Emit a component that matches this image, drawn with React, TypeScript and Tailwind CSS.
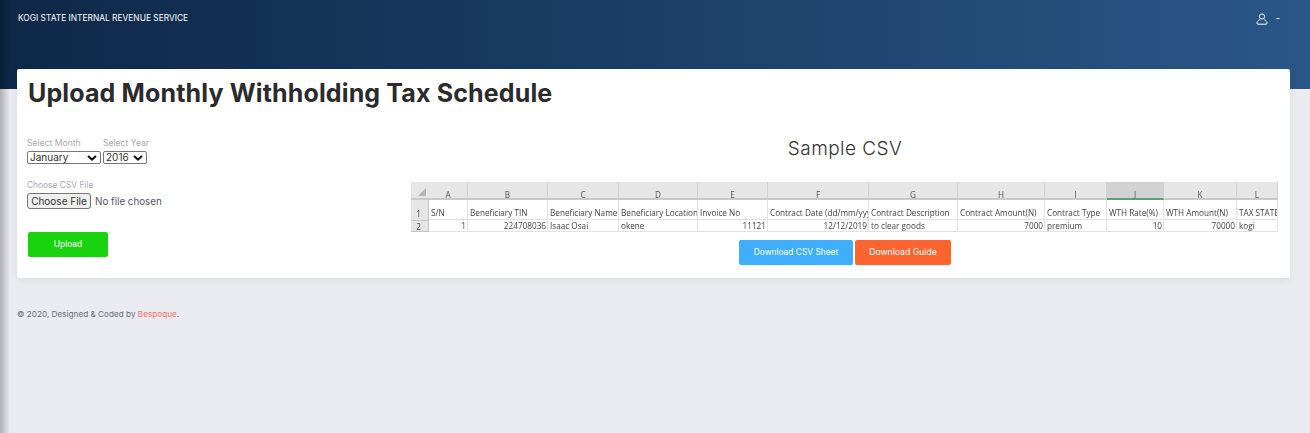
import React from "react";

const cols = ["A","B","C","D","E","F","G","H","I","J","K","L"];
const row1 = ["S/N","Beneficiary TIN","Beneficiary Name","Beneficiary Location","Invoice No","Contract Date (dd/mm/yyy","Contract Description","Contract Amount(N)","Contract Type","WTH Rate(%)","WTH Amount(N)","TAX STATE"];
const row2: [string, boolean][] = [["1",true],["224708036",true],["Isaac Osai",false],["okene",false],["11121",true],["12/12/2019",true],["to clear goods",false],["7000",true],["premium",false],["10",true],["70000",true],["kogi",false]];

function Sheet() {
  return (
    <div className="w-[868px] grid grid-cols-[18px_39px_80px_71px_79px_70px_101px_89px_87px_62px_57px_73px_41px] grid-rows-[18px_20px_12px] text-[8.2px] leading-[11px] text-[#444444] font-['Open_Sans',sans-serif] blur-[0.3px]">
      <div className="bg-[#e6e6e6] border-b-[2px] border-[#c9c9c9] flex items-end justify-end pr-[3px] pb-[2px]">
        <svg width="8" height="8" viewBox="0 0 8 8"><path d="M8 0V8H0Z" fill="#b5b5b5" /></svg>
      </div>
      {cols.map((c) => (
        <div key={c} className={c === "J" ? "bg-[#d2d2d2] border-b-[2px] border-[#5f9e7c] border-r border-r-[#d0d0d0] flex items-center justify-center pt-[9px] text-[#2f6f4f]" : "bg-[#e6e6e6] border-b-[2px] border-[#c9c9c9] border-r border-r-[#d0d0d0] flex items-center justify-center pt-[9px] text-[#555555]"}>{c}</div>
      ))}
      <div className="bg-[#e6e6e6] border-r border-[#c4c4c4] flex items-end justify-center pr-[2px] pb-px text-[#444444]">1</div>
      {row1.map((t) => (
        <div key={t} className="border-r border-b border-[#e2e2e2] flex items-end pl-[2px] pb-px overflow-hidden whitespace-nowrap">{t}</div>
      ))}
      <div className="bg-[#e6e6e6] border-r border-y border-[#c4c4c4] flex items-center justify-center pr-[2px] text-[#444444]">2</div>
      {row2.map(([t, right], i) => (
        <div key={i} className={right ? "border-r border-b border-[#e2e2e2] flex items-center justify-end pr-[1px] whitespace-nowrap" : "border-r border-b border-[#e2e2e2] flex items-center pl-[2px] whitespace-nowrap"}>{t}</div>
      ))}
    </div>
  );
}

function Chevron() {
  return (
    <svg width="10" height="6" viewBox="0 0 10 6" fill="none" stroke="#111111" strokeWidth="2" className="absolute right-[4px] top-[4px] pointer-events-none">
      <path d="M1 1l4 3.6L9 1" />
    </svg>
  );
}

export default function App() {
  return (
    <div className="relative min-h-[433px] bg-[#e9ebf0] font-['Inter',sans-serif] overflow-hidden">
      <header className="h-[89px] bg-gradient-to-r from-[#0e2848] to-[#2a5788] flex items-start justify-between pl-[18px] pr-[30px] pt-[12px] text-white">
        <span className="text-[8.4px] leading-[13px] whitespace-nowrap">KOGI STATE INTERNAL REVENUE SERVICE</span>
        <div className="flex items-start gap-[7px]">
          <svg width="12" height="12" viewBox="0 0 12 12" fill="none" stroke="currentColor" strokeWidth="1" className="mt-px">
            <circle cx="6" cy="3.5" r="2.6" />
            <path d="M3.8 6.6C2.2 7.2 1 8.6 1 10.2c0 .6.4 1 1 1h8c.6 0 1-.4 1-1 0-1.6-1.2-3-2.8-3.6" />
          </svg>
          <span className="text-[10px] leading-[12px]">-</span>
        </div>
      </header>

      <main className="relative -mt-[20px] ml-[17px] mr-[20px] h-[209px] bg-white rounded-[2px] shadow-[0_2px_8px_rgba(0,0,0,0.06)] pl-[10px] pr-[11px] pt-[8px]">
        <h1 className="pl-px text-[25px] leading-[32px] font-bold text-[#2b2b2b] whitespace-nowrap tracking-[0.14px]">Upload Monthly Withholding Tax Schedule</h1>
        <div className="flex mt-[25px]">
          <form className="w-[384px] shrink-0 flex flex-col items-start pt-[3px]">
            <div className="flex gap-[2px]">
              <label className="flex flex-col w-[74px]">
                <span className="text-[8.6px] leading-[12px] mb-[2px] text-[#a9a9b0] whitespace-nowrap">Select Month</span>
                <span className="relative block">
                  <select className="appearance-none block h-[13px] w-[74px] py-0 pl-[2px] pr-0 text-[10px] leading-[11px] text-[#333333] border border-[#767676] rounded-[2px] bg-white" defaultValue="January">
                    <option>January</option>
                  </select>
                  <Chevron />
                </span>
              </label>
              <label className="flex flex-col w-[44px]">
                <span className="text-[8.6px] leading-[12px] mb-[2px] text-[#a9a9b0] whitespace-nowrap">Select Year</span>
                <span className="relative block">
                  <select className="appearance-none block h-[13px] w-[44px] py-0 pl-[2px] pr-0 text-[10px] leading-[11px] text-[#333333] border border-[#767676] rounded-[2px] bg-white" defaultValue="2016">
                    <option>2016</option>
                  </select>
                  <Chevron />
                </span>
              </label>
            </div>
            <label className="flex flex-col mt-[15px]">
              <span className="text-[8.4px] leading-[12px] mb-[2px] text-[#a9a9b0]">Choose CSV File</span>
              <input type="file" className="w-[200px] text-[9.8px] leading-[13px] text-[#555566] file:bg-[#efefef] file:border file:border-[#767676] file:rounded-[3px] file:h-[16px] file:w-[64px] file:p-0 file:mr-[4px] file:text-[#333333] file:text-[10px]" />
            </label>
            <button type="button" className="mt-[23px] ml-px w-[80px] h-[25px] bg-[#19d30f] rounded-[2px] text-white text-[8.4px]">Upload</button>
          </form>
          <section className="flex flex-col items-center w-[868px]">
            <h2 className="text-[19px] leading-[24px] font-light text-[#333333] tracking-[0.45px] mt-[3px]">Sample CSV</h2>
            <div className="mt-[21px]"><Sheet /></div>
            <div className="flex gap-[2px] mt-[8px]">
              <button type="button" className="w-[114px] h-[25px] bg-[#3eaefd] rounded-[2px] text-white text-[8.4px] whitespace-nowrap">Download CSV Sheet</button>
              <button type="button" className="w-[96px] h-[25px] bg-[#fd6430] rounded-[2px] text-white text-[8.7px] whitespace-nowrap">Download Guide</button>
            </div>
          </section>
        </div>
      </main>

      <footer className="mt-[30px] pl-[17px] text-[8.2px] leading-[12px] text-[#6b6b75]">
        © 2020, Designed &amp; Coded by <span className="text-[#fd6b6b]">Bespoque</span>.
      </footer>

      <div className="absolute inset-y-0 left-0 w-[10px] bg-gradient-to-r from-black/25 to-transparent pointer-events-none" />
    </div>
  );
}
